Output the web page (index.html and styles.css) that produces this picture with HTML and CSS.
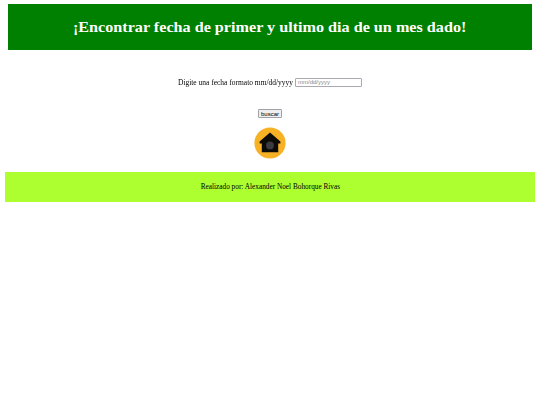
FILE: index.html
```html
<!DOCTYPE html>
<html lang="es">
<head>
<meta charset="utf-8">
<title>Fecha</title>
<link rel="stylesheet" href="styles.css">
</head>
<body>
<header class="banner"><h1 class="title">¡Encontrar fecha de primer y ultimo dia de un mes dado!</h1></header>
<main class="content">
  <form class="form">
    <div class="field"><label class="label" for="f">Digite una fecha formato mm/dd/yyyy</label> <input class="input" id="f" type="text" placeholder="mm/dd/yyyy"></div>
    <button class="btn" type="button">buscar</button>
  </form>
  <a class="home" href="#" aria-label="Inicio">
    <svg class="home-icon" viewBox="0 0 32 32" width="32" height="32">
      <circle cx="16" cy="16" r="15.6" fill="#f7b125"/>
      <path d="M16 5.4 L26.4 14.6 V16.6 H24.2 V25.2 H7.8 V16.6 H5.6 V14.6 Z" fill="#0d0b08"/>
      <circle cx="16" cy="18.4" r="3.9" fill="#3c3c40"/>
    </svg>
  </a>
</main>
<footer class="footer"><p class="credit">Realizado por: Alexander Noel Bohorque Rivas</p></footer>
</body>
</html>
```
FILE: styles.css
```css
html, body { margin: 0; padding: 0; background: #fff; }
body { padding: 4px 5px 0; font-family: "Liberation Serif", serif; color: #000; }
.banner { margin: 0 3px; height: 46px; background: #008000; display: flex; align-items: center; justify-content: center; }
.title { margin: 0; font-size: 15px; font-weight: bold; color: #fff; transform: scaleX(1.077); }
.content { display: flex; flex-direction: column; align-items: center; opacity: 0.999; }
.form { display: flex; flex-direction: column; align-items: center; padding-top: 27px; }
.field { font-size: 7.3px; height: 10px; display: flex; align-items: center; gap: 2px; }
.label { display: block; width: 115px; white-space: nowrap; transform: scaleX(1.025); transform-origin: left center; }
.input { width: 61px; height: 5px; padding: 1px 2px; margin: 0; border: 1px solid #a8a8b0; border-radius: 1px; font: 6px "Liberation Sans", sans-serif; background: #fff; }
.input::placeholder { color: #888; }
.btn { margin-top: 22px; width: 24px; height: 9px; padding: 0; border: 1px solid #a0a0a8; border-radius: 1px; background: #efefef; font: 6px/1 "Liberation Sans", sans-serif; color: #000; display: flex; align-items: center; justify-content: center; }
.home { display: block; margin-top: 9px; height: 32px; }
.home-icon { display: block; }
.footer { margin-top: 13px; height: 30px; background: #adff2f; display: flex; align-items: center; justify-content: center; }
.credit { margin: 0; font-size: 7.25px; transform: scaleX(1.005); opacity: 0.999; }
```
